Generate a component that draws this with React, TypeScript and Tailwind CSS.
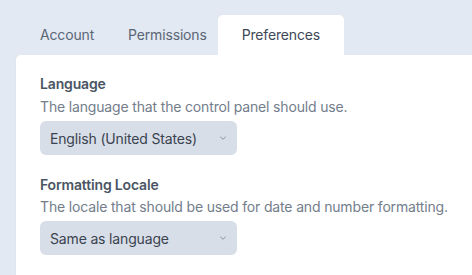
import React from "react";

function Select({ value, width }: { value: string; width: string }) {
  return (
    <div
      className={`mt-1 flex h-[34px] items-center justify-between rounded-md bg-[#d7dee8] pl-2.5 pr-2.5 text-[14px] text-[#3b4350] ${width}`}
    >
      <span>{value}</span>
      <svg width="8" height="6" viewBox="0 0 8 6" className="text-[#8a94a3]">
        <path d="M1.5 2 L4 4.3 L6.5 2" fill="none" stroke="currentColor" strokeWidth="1" strokeLinecap="round" strokeLinejoin="round" />
      </svg>
    </div>
  );
}

export default function App() {
  return (
    <div
      className="h-[275px] w-[472px] overflow-hidden bg-[#e2e9f3] pt-[15px] tracking-[-0.16px]"
      style={{ fontFamily: "Inter, 'Noto Sans', sans-serif" }}
    >
      <div className="flex pl-4 text-[14px] leading-5">
        <div className="pl-6 pr-[22px] py-2.5 text-[#5b6675]">Account</div>
        <div className="pl-3 pr-[11px] py-2.5 text-[#5b6675]">Permissions</div>
        <div className="rounded-t-[5px] bg-white px-6 py-2.5 text-[#3e4856]">Preferences</div>
      </div>
      <div className="ml-4 h-[240px] rounded-tl-[5px] bg-white pl-6 pt-[19px] shadow-[0_1px_2px_rgba(0,0,0,0.06)]">
        <div className="text-[14px] font-semibold leading-5 text-[#4a5564]">Language</div>
        <div className="mt-[3px] text-[14px] leading-5 text-[#737d8b]">
          The language that the control panel should use.
        </div>
        <Select value="English (United States)" width="w-[197px]" />
        <div className="mt-5 text-[14px] font-semibold leading-5 text-[#4a5564]">Formatting Locale</div>
        <div className="mt-[2px] text-[14px] leading-5 text-[#737d8b]">
          The locale that should be used for date and number formatting.
        </div>
        <div className="mt-[1px]">
          <Select value="Same as language" width="w-[197px]" />
        </div>
      </div>
    </div>
  );
}
